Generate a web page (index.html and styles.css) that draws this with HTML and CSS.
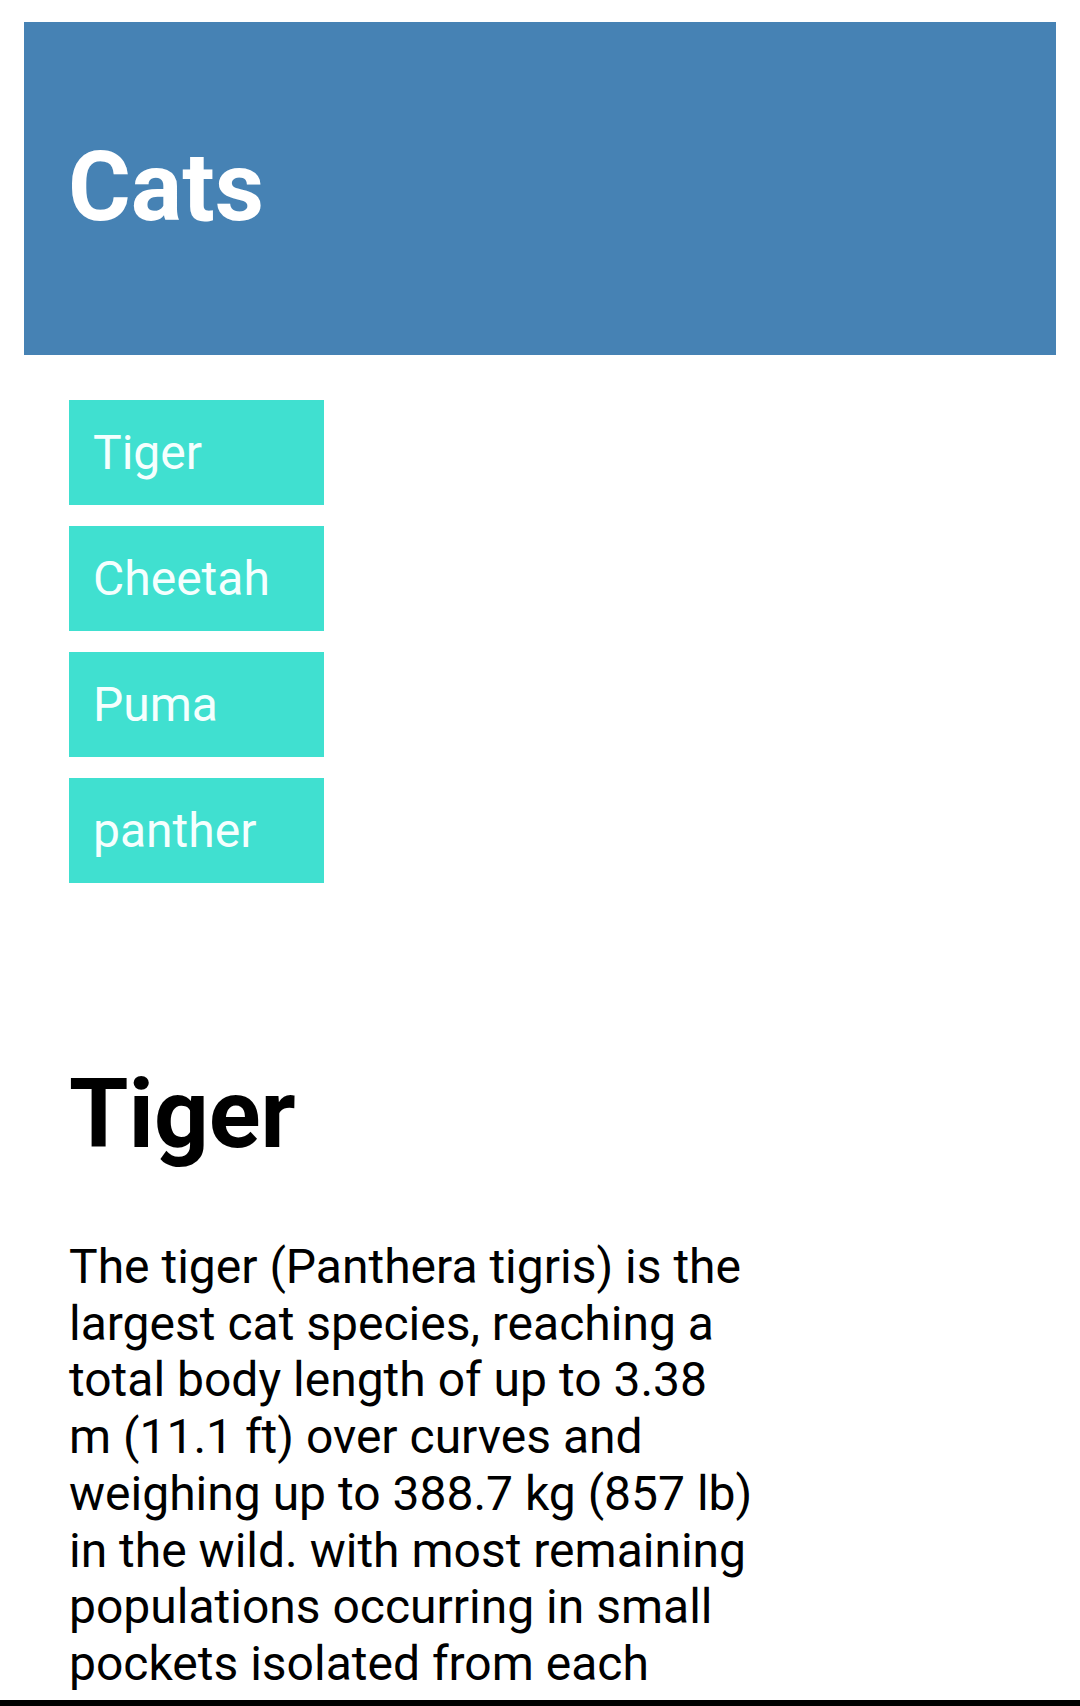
FILE: index.html
```html
<!DOCTYPE html>
<html lang="en">
<head>
<meta charset="utf-8">
<title>Cats</title>
<link rel="stylesheet" href="styles.css">
</head>
<body>
<header class="site-header">
  <h1 class="site-title">Cats</h1>
</header>
<nav class="cat-nav">
  <a class="cat-link" href="#">Tiger</a>
  <a class="cat-link" href="#">Cheetah</a>
  <a class="cat-link" href="#">Puma</a>
  <a class="cat-link" href="#">panther</a>
</nav>
<main class="article">
  <h2 class="article-title">Tiger</h2>
  <p class="article-text">The tiger (Panthera tigris) is the largest cat species, reaching a total body length of up to 3.38 m (11.1 ft) over curves and weighing up to 388.7 kg (857 lb) in the wild. with most remaining populations occurring in small pockets isolated from each other, of which about 2,000 exist on the Indian subcontinent.</p>
</main>
<div class="bottom-bar"></div>
</body>
</html>
```
FILE: styles.css
```css
html, body {
  margin: 0;
  padding: 0;
}
body {
  padding: 22px 24px 0;
  font-family: Roboto, "Liberation Sans", sans-serif;
  color: #000;
  background: #fff;
}
.site-header {
  background: #4682b4;
  padding: 109px 44px 111.5px;
}
.site-title {
  margin: 0;
  font-size: 96px;
  font-weight: 700;
  line-height: 112.5px;
  color: #fff;
}
.cat-nav {
  display: flex;
  flex-direction: column;
  gap: 21px;
  margin: 45px 0 0 45px;
}
.cat-link {
  display: block;
  width: 231px;
  padding: 24px 0 24px 24px;
  height: 57px;
  background: #40e0d0;
  color: #f5fffe;
  font-size: 48px;
  line-height: 57px;
  text-decoration: none;
}
.article {
  margin: 175px 0 0 45px;
  width: 688px;
}
.article-title {
  margin: 0;
  font-size: 96px;
  font-weight: 700;
  line-height: 112.5px;
}
.article-text {
  margin: 68.5px 0 0;
  font-size: 48px;
  line-height: 56.7px;
}
.bottom-bar {
  position: fixed;
  left: 0;
  right: 0;
  bottom: 0;
  height: 6px;
  background: #000;
}
```
